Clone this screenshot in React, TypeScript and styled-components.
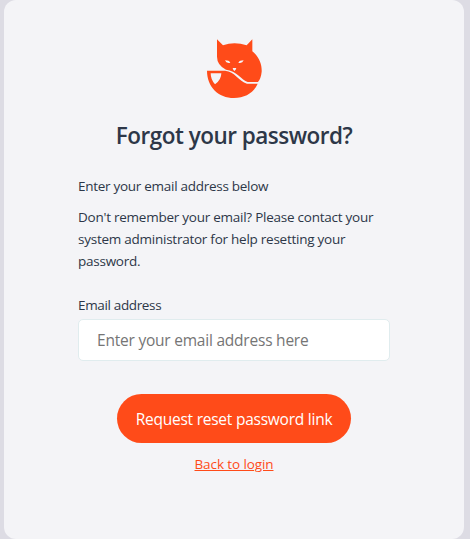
import React from "react";
import styled, { createGlobalStyle } from "styled-components";

const GlobalStyle = createGlobalStyle`
  * { box-sizing: border-box; }
  body {
    margin: 0;
    background: #dddce4;
    color: #2d3748;
    font-family: "Open Sans", "Noto Sans", sans-serif;
  }
`;

const Card = styled.main`
  width: 460px;
  height: 539px;
  margin-left: 4px;
  padding-top: 38px;
  border-radius: 12px;
  background: #f4f4f7;
  display: flex;
  flex-direction: column;
  align-items: center;
`;

const Logo = styled.svg`
  display: block;
  width: 58px;
  height: 62px;
`;

const Title = styled.h1`
  margin: 20px 0 0;
  font-size: 22.5px;
  line-height: 32px;
  font-weight: 600;
  letter-spacing: -0.5px;
  white-space: nowrap;
`;

const Form = styled.form`
  width: 312px;
  margin: 23px 0 0;
  display: flex;
  flex-direction: column;
`;

const Text = styled.p<{ $gap?: number; $spacing: number }>`
  margin: ${({ $gap = 0 }) => $gap}px 0 0;
  font-size: 13.5px;
  line-height: 22px;
  letter-spacing: ${({ $spacing }) => $spacing}px;
  white-space: nowrap;
`;

const Label = styled.label`
  margin-top: 22px;
  font-size: 13.5px;
  line-height: 22px;
  letter-spacing: -0.35px;
`;

const Input = styled.input`
  height: 42px;
  margin-top: 3px;
  padding: 0 18px;
  border: 1px solid #e0ecee;
  border-radius: 5px;
  background: #fff;
  font: 15.5px "Open Sans", "Noto Sans", sans-serif;
  letter-spacing: -0.22px;
  outline: none;
  &::placeholder { color: #757575; opacity: 1; }
`;

const Button = styled.button`
  align-self: center;
  width: 234px;
  height: 49px;
  margin-top: 33px;
  padding: 0;
  border: 0;
  border-radius: 25px;
  background: #ff4b19;
  color: #fff;
  font: 15.5px "Open Sans", "Noto Sans", sans-serif;
  letter-spacing: -0.24px;
  white-space: nowrap;
`;

const BackLink = styled.a`
  align-self: center;
  margin-top: 10px;
  color: #ff4b19;
  font-size: 13.5px;
  line-height: 22px;
  letter-spacing: -0.1px;
  text-decoration: underline;
`;

function FoxLogo() {
  return (
    <Logo viewBox="30 24 174 186" aria-label="Fox">
      <path fill="#ff4b19" d="M66 28 84 46Q118 33 155 46L172 28V64C194 82 201 105 200 125Q198 145 189 156H158C140 150 124 122 93 119Q66 105 66 80Z" />
      <path fill="#ff4b19" d="M36 122H90C120 124 131 154 156 161H188C175 190 150 204 117 204C70 204 36 170 36 122Z" />
      <path fill="#f4f4f7" d="M47 130H79Q79 150 60 163Q47 149 47 130ZM90 91Q102 91 106 98Q94 101 90 91ZM146 91Q134 91 130 98Q142 101 146 91ZM113 114H124Q123 120 118 123Q114 120 113 114Z" />
    </Logo>
  );
}

export default function App() {
  return (
    <>
      <GlobalStyle />
      <Card>
        <FoxLogo />
        <Title>Forgot your password?</Title>
        <Form>
          <Text $spacing={-0.28}>Enter your email address below</Text>
          <Text $gap={9} $spacing={-0.25}>
            Don't remember your email? Please contact your
            <br />
            system administrator for help resetting your
            <br />
            password.
          </Text>
          <Label htmlFor="email">Email address</Label>
          <Input id="email" type="email" placeholder="Enter your email address here" />
          <Button type="button">Request reset password link</Button>
          <BackLink href="#">Back to login</BackLink>
        </Form>
      </Card>
    </>
  );
}
